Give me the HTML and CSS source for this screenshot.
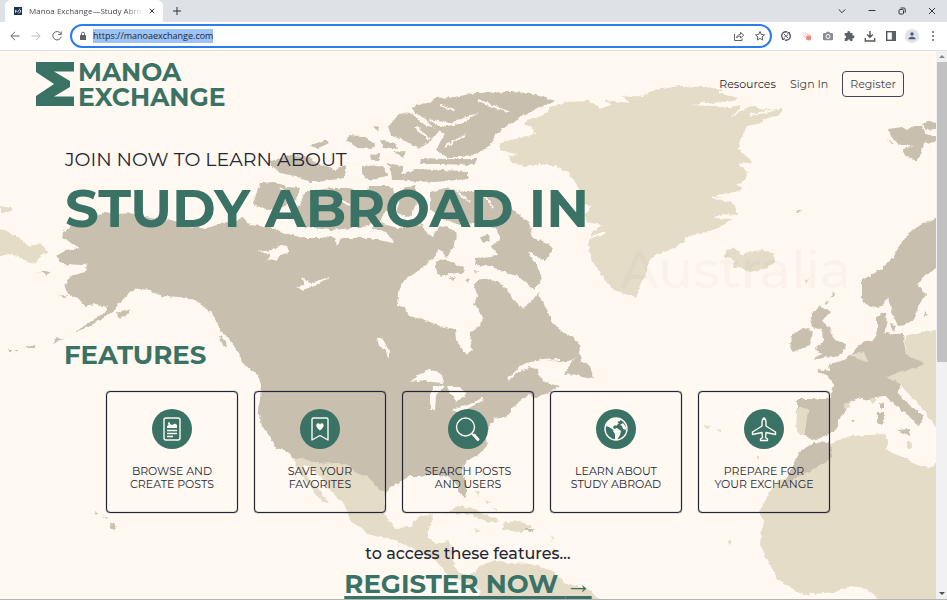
FILE: index.html
```html
<!DOCTYPE html>
<html lang="en">
<head>
<meta charset="utf-8">
<title>Manoa Exchange—Study Abroad</title>
<link rel="stylesheet" href="styles.css">
</head>
<body>
<div class="browser">
  <div class="tabstrip">
    <div class="tab">
      <svg class="favicon" viewBox="0 0 8 8"><rect width="8" height="8" fill="#1d3054"/><path d="M1.5 5.8V3.2L3.6 5l2.6-3.4M4.5 6.2l2-1V3" fill="none" stroke="#dfe6f2" stroke-width=".9"/></svg>
      <span class="tab-title">Manoa Exchange—Study Abroad</span>
      <button class="tab-close" aria-label="Close tab"><svg viewBox="0 0 6 6"><path d="M.7.7l4.6 4.6M5.3.7L.7 5.3"/></svg></button>
    </div>
    <button class="new-tab" aria-label="New tab"><svg viewBox="0 0 8 8"><path d="M4 0v8M0 4h8"/></svg></button>
    <div class="window-buttons">
      <button aria-label="Search tabs"><svg viewBox="0 0 10 10"><path d="M1.8 3.5L5 6.7l3.200-3.200"/></svg></button>
      <button aria-label="Minimize"><svg viewBox="0 0 10 10"><path d="M1.500 4.500h7"/></svg></button>
      <button aria-label="Restore"><svg viewBox="0 0 10 10"><rect x="2" y="3.500" width="4.500" height="4.500" rx="1"/><path d="M3.500 2h3.500q1.200 0 1.200 1.200v3.500"/></svg></button>
      <button aria-label="Close"><svg viewBox="0 0 10 10"><path d="M2 2l6 6M8 2L2 8"/></svg></button>
    </div>
  </div>
  <div class="toolbar">
    <button class="tool" aria-label="Back"><svg viewBox="0 0 12 12"><path d="M10.500 6H2M6 1.800L1.800 6 6 10.200"/></svg></button>
    <button class="tool dim" aria-label="Forward"><svg viewBox="0 0 12 12"><path d="M1.500 6H10M6 1.800L10.200 6 6 10.200"/></svg></button>
    <button class="tool" aria-label="Reload"><svg viewBox="0 0 12 12"><path d="M9.800 3.800A4.200 4.200 0 1 0 10.200 6.600M10.200 1.500v3h-3"/></svg></button>
    <div class="omnibox">
      <svg class="lock" viewBox="0 0 8 10"><rect x="1" y="4" width="6" height="5" rx=".6" fill="#5f6368"/><path d="M2.500 4V2.700a1.500 1.500 0 0 1 3 0V4" fill="none" stroke="#5f6368"/></svg>
      <span class="url">https://manoaexchange.com</span>
      <button class="tool small" aria-label="Share"><svg viewBox="0 0 12 12"><path d="M1.500 4v6.500h7.500V8.500M3.500 8C4 5.500 5.500 4.500 7.500 4.400V2.300L10.800 5.200 7.500 8V6.200C5.800 6.200 4.500 6.800 3.500 8z"/></svg></button>
      <button class="tool small" aria-label="Bookmark"><svg viewBox="0 0 12 12"><path d="M6 1.500l1.300 3 3.200.3-2.400 2.100.7 3.200L6 8.400l-2.800 1.700.7-3.200L1.500 4.800l3.200-.3z"/></svg></button>
    </div>
    <div class="extensions">
      <button class="tool" aria-label="Sync extension"><svg viewBox="0 0 12 12"><circle class="bold" cx="6" cy="6" r="4.300" stroke-dasharray="11.500 2" stroke-dashoffset="4"/><path d="M4 4l4 4M4.500 6.500L7.500 5.500M2 9.500h2.200V7.500M10 2.500H7.800v2"/></svg></button>
      <button class="tool" aria-label="Meteor extension"><svg viewBox="0 0 12 12"><circle cx="7.600" cy="7.800" r="2.600" fill="#f28780" stroke="none"/><path d="M2 2.500l4 4M4.500 2.500l4 4M2.300 5l4 4M7 3.200l3 3" stroke="#f3a29b" stroke-dasharray="1 .5"/></svg></button>
      <button class="tool" aria-label="Camera extension"><svg viewBox="0 0 12 12"><path fill="#8a8d91" stroke="none" d="M2 3h2l.8-1.300h2.400L8 3h2q1 0 1 1v5.200q0 1-1 1H2q-1 0-1-1V4q0-1 1-1z"/><circle cx="6" cy="6.500" r="2" fill="#8a8d91" stroke="#fff"/></svg></button>
      <button class="tool" aria-label="Extensions"><svg viewBox="0 0 12 12"><path fill="#5f6368" stroke="none" d="M2 3h2.300a1.500 1.500 0 1 1 2.900 0H9.500v2.300a1.500 1.500 0 1 1 0 2.900v2.700H7.200a1.400 1.400 0 0 0-2.800 0H1.700V8.300a1.400 1.400 0 0 0 0-2.800V3z"/></svg></button>
      <button class="tool" aria-label="Downloads"><svg viewBox="0 0 12 12"><path class="bold" d="M6 1v6M3.200 4.500L6 7.300l2.800-2.800M1.300 8v3h9.400V8"/></svg></button>
      <button class="tool" aria-label="Side panel"><svg viewBox="0 0 12 12"><rect class="bold" x="1.700" y="1.700" width="8.600" height="8.600"/><path fill="#5f6368" stroke="none" d="M6.800 1.500h3.700v9H6.800z"/></svg></button>
      <button class="tool avatar" aria-label="Profile"><svg viewBox="0 0 12 12"><circle cx="6" cy="3.700" r="2.100" fill="#505a70" stroke="none"/><path fill="#505a70" stroke="none" d="M1.800 10V9Q2.500 7 6 7t4.200 2v1z"/></svg></button>
      <button class="tool" aria-label="Menu"><svg viewBox="0 0 12 12"><g fill="#5f6368" stroke="none"><circle cx="6" cy="2" r="1"/><circle cx="6" cy="6" r="1"/><circle cx="6" cy="10" r="1"/></g></svg></button>
    </div>
  </div>
  <div class="viewport">
    <div class="page">
      <svg class="map" viewBox="0 51 936 549" preserveAspectRatio="xMinYMin slice" aria-hidden="true">
        <defs><filter id="coast" filterUnits="userSpaceOnUse" x="0" y="51" width="936" height="549"><feTurbulence type="fractalNoise" baseFrequency=".2" numOctaves="3" seed="4" result="n"/><feDisplacementMap in="SourceGraphic" in2="n" scale="4" xChannelSelector="R" yChannelSelector="G"/></filter></defs>
        <g filter="url(#coast)">
          <g fill="#e4dcc7">
            <path d="M500 144L506 141 520 138 535 134 533 128 524 124 527 120 541 116 552 107 565 102 590 101 600 108 612 105 603 100 630 103 622 95 640 97 655 90 680 86 705 87 722 90 718 93 738 98 735 101 690 105 730 107 740 105 739 110 730 118 750 106 762 109 783 109 780 114 763 120 762 123 747 126 743 135 738 148 745 155 753 162 738 164 748 172 745 180 735 185 743 189 735 192 716 195 735 205 738 215 722 214 712 218 733 219 720 227 705 233 688 236 683 242 672 249 655 255 648 262 647 272 640 285 636 297 625 294 614 290 603 278 593 262 588 245 592 232 602 225 586 222 585 214 592 206 583 204 580 195 578 185 568 173 555 166 540 164 525 167 512 162 508 156 518 155 500 150z"/>
            <path d="M725 256L727 250 735 248 741 255 750 251 765 250 774 254 775 262 765 269 750 272 738 268 732 268 734 261z"/>
            <path d="M0 206L10 208 12 211 0 213zM-5 229L5 230 22 240 28 246 40 244 48 251 39 257 36 264 27 262 18 256 8 254-5 258z"/>
            <path d="M293 458L305 459 320 464 340 463 350 466 357 474 368 476 378 490 387 492 384 500 385 515 395 528 410 527 418 517 433 514 427 537 435 543 450 541 452 560 458 572 470 576 480 566 495 560 504 563 530 564 550 570 565 583 590 590 604 606 478 606 480 590 466 582 450 577 435 560 415 550 395 540 370 535 350 520 345 505 330 490 318 474 309 466 303 466 308 478 320 491 329 503 323 502 309 486 299 471z"/>
            <path d="M446 513L458 506 475 509 488 516 500 521 488 522 470 514zM505 522L520 521 532 527 520 532 502 530zM474 529L482 531 476 533z"/>
            <path d="M905 336L920 332 945 329 945 440 925 412 910 395 900 385 880 378 900 372 925 363 906 355z"/>
            <path d="M828 444L850 436 885 434 888 440 885 450 905 458 920 466 930 468 945 457 945 610 882 606 875 595 865 588 850 586 835 592 803 595 780 582 770 565 760 545 763 520 759 512 768 495 778 480 795 478 830 458z"/>
            <path d="M475 490l5 3-2 3zM484 498l6 4-2 2zM492 507l5 2v2zM551 535l2 2-1 6zM553 548l3 3-2 6zM703 425l8 1-3 2zM717 429l4 1 0 3zM804 280l5-1-3 5zM757 456l4 1-3 2zM720 535l5 2M726 542l6-3-2 6z"/>
          </g>
          <g fill="#c9bfae">
            <path d="M63 233L67 228 85 222 93 218 105 212 117 214 130 213 150 218 172 220 190 226 205 229 225 222 232 223 243 217 250 225 270 227 285 233 303 238 320 238 335 236 337 246 341 238 370 238 393 243 394 240 385 232 372 228 376 222 398 228 410 226 423 224 425 232 433 237 437 228 448 226 457 234 453 248 447 257 438 249 437 255 428 262 423 268 418 271 405 280 398 292 397 305 404 307 409 316 425 320 440 326 455 329 456 340 463 350 467 354 472 350 470 333 480 326 482 318 478 309 474 305 477 296 474 284 480 279 487 279 498 282 508 290 513 300 523 309 531 302 538 293 547 310 552 322 560 330 570 336 579 343 580 352 573 360 560 362 545 360 530 361 520 366 508 380 515 374 530 367 538 369 539 376 546 383 560 386 545 394 535 398 530 394 520 401 511 410 508 416 495 418 490 424 486 437 487 446 479 454 467 461 462 470 467 485 467 495 464 498 459 492 455 482 448 477 430 474 420 476 410 476 400 482 390 487 387 492 378 490 368 476 357 474 350 466 340 463 320 464 305 459 293 458 290 454 283 450 276 448 270 437 262 426 258 410 260 400 261 385 258 374 245 366 240 355 230 340 220 330 213 318 205 308 195 300 180 297 162 296 150 290 140 289 133 290 120 302 115 310 100 320 90 326 72 334 90 322 103 314 108 307 95 304 85 306 78 298 68 294 64 285 70 276 85 272 88 262 82 265 62 264 56 256 65 251 80 248 75 245 62 238z"/>
            <path d="M411 107L430 102 435 98 455 97 475 93 510 92 530 93 555 101 540 107 523 116 508 125 495 135 490 146 478 153 462 157 447 157 436 150 445 133 432 127 425 118 415 113z"/>
            <path d="M388 127L400 113 412 114 425 125 440 130 430 142 418 148 405 141 392 136z"/>
            <path d="M421 158L445 159 478 159 474 165 440 164 420 164zM401 175L415 169 440 170 468 171 468 179 435 182 405 181z"/>
            <path d="M253 204L260 183 275 182 288 187 300 188 296 200 275 211 262 208zM305 192L330 188 350 188 365 195 380 200 385 210 380 222 355 228 330 230 300 226 290 215 300 205z"/>
            <path d="M268 162L290 155 310 158 322 166 335 170 345 166 345 178 325 181 310 182 295 176 280 173zM310 145L325 140 329 143 318 149zM348 135L362 136 375 144 372 149 358 148 347 141zM372 126L379 127 378 131zM380 140L395 143 397 149 383 147zM370 155L380 154 380 160 371 160zM362 166L383 165 388 175 370 181 362 174zM388 163L402 166 403 180 393 180zM392 152L406 151 404 157z"/>
            <path d="M368 186L390 186 397 196 394 209 375 212 366 203zM404 188L415 185 418 200 410 217 396 213z"/>
            <path d="M430 192L445 188 462 191 490 190 506 205 520 215 530 225 533 238 548 243 553 249 545 261 528 252 537 265 542 278 535 290 520 277 505 272 490 266 475 265 476 258 497 255 492 246 500 240 498 230 480 222 460 225 440 218 430 210z"/>
            <path d="M437 258L444 259 464 268 463 274 448 273 441 278 436 268zM480 236L488 235 490 241 483 243zM448 278L456 276 453 281zM465 280l5-1-1 5zM474 271l6 1-5 2z"/>
            <path d="M564 375L575 358 579 352 581 361 590 366 594 379 582 377 573 374z"/>
            <path d="M240 357L252 362 266 371 269 377 256 372 243 363zM219 335L226 342 227 349 220 342z"/>
            <path d="M117 312L130 309 128 314 120 319zM54 340L58 337 63 339 53 344zM38 271L51 273 47 275zM58 296L67 295 65 298z"/>
            <path d="M8 350l4 0v2H8zM14 350l4 0v2zM23 348l12-3v3zM110 522l4 1 3 4-3 3-3-2zM94 512l3 1-1 2zM102 515l6 3-1 1z"/>
            <path d="M945 216L925 222 910 232 900 245 893 258 880 270 862 280 862 300 870 308 882 306 888 298 893 315 898 326 906 325 915 318 918 306 926 295 918 285 925 275 945 262z"/>
            <path d="M877 316L886 312 887 325 884 333 903 334 906 355 918 360 925 363 918 367 900 372 885 378 895 380 901 385 898 392 903 400 915 409 924 416 919 426 908 415 895 405 885 396 875 397 868 401 858 398 850 402 845 412 838 420 838 428 831 433 820 438 812 440 804 435 808 409 797 408 797 399 815 399 830 399 834 385 827 375 817 372 817 369 830 371 829 364 845 360 855 350 862 342 875 339 877 330z"/>
            <path d="M810 318L820 305 830 312 822 321 830 328 835 340 846 344 843 354 828 357 813 360 822 353 815 350 823 341 822 330 812 327zM790 348L792 335 803 328 812 330 810 345 793 352z"/>
            <path d="M814 442L830 443 832 458 815 468 795 478 784 486 793 465 800 452zM877 412h7v12h-7zM897 430l13-1v7zM880 402l4 1v5h-4zM890 324l6 1-2 7zM832 292l3 2-4 4zM825 301l4 1-4 4zM925 310l3 4-4 4zM851 420l5 0-3 2z"/>
            <path d="M888 129L902 127 907 130 913 126 922 126 926 134 936 137 936 142 924 143 921 154 916 161 904 154 903 149 914 146 900 145 893 139zM922 124l8-3 6 2v6l-10 1zM887 138l7 6-2 0z"/>
            <path d="M796 212l5-2 0 2-4 1zM525 529h8v2h-8z"/>
          </g>
          <g fill="#fff9f1">
            <path d="M257 252L272 250 282 245 287 246 289 252 281 255 275 261 267 259 271 254zM297 287L305 284 302 278 312 283 331 276 318 285 302 290zM377 338L382 338 389 350 389 359 385 349 379 346z"/>
            <path d="M411 382L420 374 429 369 442 374 444 383 432 382 424 380zM434 387L445 386 436 396 435 410 430 410 430 397zM447 386L460 386 466 394 457 402 450 394zM452 410L468 405 482 398 484 400 469 408 457 412z"/>
            <path d="M305 231L322 235 340 231 370 232 368 236 335 237zM428 119L450 123 480 112 460 124 440 127z"/>
          </g>
          <path d="M797 408L808 409 806 425 804 435 796 433zM850 355L864 352 868 362 860 360z" fill="#e4dcc7"/>
          <g fill="none" stroke="#fff9f1" stroke-width="2">
            <path d="M440 105l14 5M478 100l30 12M465 135l-20 12M415 127l15 12M508 380q20-24 52-20M700 103l25 3M750 115l25-5M712 197l24 5M590 237l15-4M455 190l15 12M483 192l10 16M330 195l20 10M280 188l15 14M900 395l10 7M210 312l9 17M435 262l10-7"/>
          </g>
          <g fill="#e4dcc7"><circle cx="847" cy="406" r="3"/><circle cx="873" cy="400" r="3"/></g>
          <circle cx="909" cy="445" r="3" fill="#e4dcc7"/>
        </g>
      </svg>
      <header class="site-header">
        <a class="logo" href="#">
          <svg viewBox="0 0 38 44" aria-hidden="true"><path fill="#3a7265" d="M0 0h38v9.500H18l16 9.500v6L18 34.500h20V44H0V34l18-12L0 10z"/></svg>
          <span>MANOA<br>EXCHANGE</span>
        </a>
        <nav class="site-nav">
          <a class="strong" href="#">Resources</a>
          <a href="#">Sign In</a>
          <a class="register" href="#">Register</a>
        </nav>
      </header>
      <main>
        <section class="hero">
          <p>JOIN NOW TO LEARN ABOUT</p>
          <h1>STUDY ABROAD IN</h1>
          <div class="country">Australia</div>
        </section>
        <section class="features">
          <h2>FEATURES</h2>
          <ul class="cards">
            <li><svg viewBox="0 0 40 40"><circle cx="20" cy="20" r="20"/><rect class="line" x="12" y="9" width="16" height="22" rx="2"/><path class="solid" d="M15 19v-2l3-2 2 1 3-1.500 2 1.500v3zM16 13.500h2v2h-2z"/><path class="line" d="M15 21.500h10M15 24.500h10M15 27.500h6"/></svg><span>BROWSE AND CREATE POSTS</span></li>
            <li><svg viewBox="0 0 40 40"><circle cx="20" cy="20" r="20"/><path class="line" d="M12 31V10.500Q12 9 13.500 9h13q1.500 0 1.500 1.500V31l-8-4.500z"/><path class="solid" d="M20 21.500c-6-4-3.500-8-1-7q1 .5 1 1 0-.5 1-1c2.500-1 5 3-1 7z"/></svg><span>SAVE YOUR FAVORITES</span></li>
            <li><svg viewBox="0 0 40 40"><circle cx="20" cy="20" r="20"/><circle class="line" cx="17.500" cy="18" r="9"/><path class="line" d="M23.500 24.500l3 3"/><path class="thick" d="M26 26l4 4.500"/></svg><span>SEARCH POSTS AND USERS</span></li>
            <li><svg viewBox="0 0 40 40"><circle cx="20" cy="20" r="20"/><circle class="line" cx="20" cy="20" r="11"/><path class="solid" d="M10 17Q12 10 20 9l5 1-1 2-3 1 2 1-3 3-1-1-2 2 1 2 3 1-2 1-6-4zM18 20l3-1 4 3-1 4-3 5h-2v-6l-2-3zM27 14l3 4v3l-3-1-1-3-2-1z"/></svg><span>LEARN ABOUT STUDY ABROAD</span></li>
            <li><svg viewBox="0 0 40 40"><circle cx="20" cy="20" r="20"/><path class="line" d="M20 9q-2 1-2 4v4l-9.500 6v2.500l9.500-2 .5 5-2 1.500v1.500h7V30l-2-1.500.5-5 9.500 2V23L22 17v-4q0-3-2-4z"/></svg><span>PREPARE FOR YOUR EXCHANGE</span></li>
          </ul>
        </section>
        <section class="cta">
          <p>to access these features…</p>
          <a href="#">REGISTER NOW <span>→</span></a>
        </section>
      </main>
    </div>
    <div class="scrollbar" aria-hidden="true"><i class="up"></i><div class="track"><div class="thumb"></div></div><i class="down"></i></div>
  </div>
</div>
</body>
</html>
```
FILE: styles.css
```css
* { box-sizing: border-box; }
body { margin: 0; font-family: Montserrat, Inter, sans-serif; color: #252635; }
button { border: 0; padding: 0; background: none; display: flex; align-items: center; justify-content: center; }
a { color: inherit; text-decoration: none; }
p, h1, h2, ul { margin: 0; padding: 0; }
ul { list-style: none; }
svg { display: block; }

.browser { height: 100vh; display: flex; flex-direction: column; overflow: hidden; border-bottom: 1px solid #b5b5b5; }
.tabstrip { height: 22px; flex: none; display: flex; align-items: center; background: #dee1e6; font-family: "Open Sans", sans-serif; }
.tab { width: 158px; height: 22px; margin-left: 5px; padding: 0 8px 0 9px; display: flex; align-items: center; background: #fff; border-radius: 6px 6px 0 0; }
.favicon { width: 8px; height: 8px; }
.tab-title { flex: 1; margin: 0 6px 0 7px; overflow: hidden; white-space: nowrap; font-size: 8px; line-height: 12px; color: #45484d; -webkit-mask-image: linear-gradient(to right, #000 85%, transparent); mask-image: linear-gradient(to right, #000 85%, transparent); }
.tab-close svg { width: 6px; height: 6px; }
.new-tab svg { width: 8px; height: 8px; }
.tab-close svg, .new-tab svg, .window-buttons svg { fill: none; stroke: #33363a; }
.new-tab { margin-left: 10px; }
.window-buttons { margin-left: auto; display: flex; }
.window-buttons button { width: 30px; height: 20px; }
.window-buttons svg { width: 10px; height: 10px; }

.toolbar { height: 29px; flex: none; display: flex; align-items: center; padding: 0 4px; background: #fff; border-bottom: 1px solid #dfe0e2; }
.tool { width: 21px; height: 21px; flex: none; }
.tool svg { width: 12px; height: 12px; fill: none; stroke: #5f6368; }
.tool .bold { stroke: #53575c; stroke-width: 1.4; }
.tool.dim svg { stroke: #b9bbbe; }
.omnibox { flex: 1; height: 24px; margin-left: 3px; padding: 0 0 0 7px; display: flex; align-items: center; border: 2px solid #2b7de9; border-radius: 12px; }
.lock { width: 8px; height: 10px; }
.url { margin-left: 6px; margin-right: auto; background: #9bc3f3; font-family: "Open Sans", sans-serif; font-size: 9px; line-height: 14px; }
.extensions { display: flex; margin-left: 3px; }
.avatar svg { width: 14px; height: 14px; padding: 2px; background: #dde1e8; border-radius: 50%; }

.viewport { flex: 1; min-height: 0; display: flex; }
.page { flex: 1; position: relative; overflow: hidden; background: #fff9f1; }
.map { position: absolute; inset: 0; width: 100%; height: 100%; }
.site-header, main { position: relative; }
.site-header { height: 66px; padding: 0 32px 0 36px; display: flex; align-items: center; justify-content: space-between; }
.logo { display: flex; align-items: center; gap: 4px; color: #3a7265; font-size: 25px; line-height: 25px; font-weight: 700; }
.logo svg { width: 38px; height: 44px; }
.logo span { padding-top: 2px; }
.site-nav { display: flex; align-items: center; gap: 14px; font-size: 11px; line-height: 14px; color: #44454f; }
.site-nav .strong { color: #252635; }
.register { padding: 5px 7px; border: 1px solid #44454f; border-radius: 4px; }

.hero { padding: 31px 65px 0; }
.hero p { font-size: 19px; line-height: 24px; }
.hero h1 { padding-top: 4px; font-size: 53px; line-height: 64px; color: #3a7265; }
.country { margin-right: 20px; text-align: right; font-size: 52px; line-height: 60px; font-weight: 500; opacity: .025; }
.features { padding: 39px 106px 0; }
.features h2 { margin: 0 0 20px -42px; font-size: 26px; line-height: 32px; color: #3a7265; }
.cards { display: grid; grid-template-columns: repeat(5, 1fr); gap: 16px; }
.cards li { height: 122px; padding: 17px 12px 0; display: flex; flex-direction: column; align-items: center; gap: 16px; border: 1px solid #252635; border-radius: 4px; box-shadow: 0 0 1px #252635, inset 0 0 1px #252635; font-size: 11px; line-height: 13px; text-align: center; }
.cards span { max-width: 104px; }
.cards svg { width: 40px; height: 40px; flex: none; fill: #3a7265; }
.cards .line { fill: none; stroke: #fff9f1; stroke-width: 1.4; stroke-linejoin: round; }
.cards .thick { fill: none; stroke: #fff9f1; stroke-width: 3; stroke-linecap: round; }
.cards .solid { fill: #fff9f1; }
.cta { padding-top: 29px; text-align: center; }
.cta p { font-size: 16px; line-height: 24px; font-weight: 500; }
.cta a { display: inline-block; font-size: 26px; line-height: 36px; font-weight: 700; color: #3a7265; text-decoration: underline; text-decoration-thickness: 3px; text-underline-offset: 3px; }
.cta a span { font-family: "Liberation Serif", serif; font-weight: 400; }

.scrollbar { width: 11px; flex: none; display: flex; flex-direction: column; align-items: center; background: #f1f1f1; }
.track { flex: 1; width: 10px; }
.thumb { height: 57%; background: #c1c1c1; }
.up, .down { height: 11px; display: flex; align-items: center; }
.up::before, .down::before { content: ""; border: 3px solid transparent; }
.up::before { border-bottom-color: #888; border-top: 0; }
.down::before { border-top-color: #505050; border-bottom: 0; }
```
